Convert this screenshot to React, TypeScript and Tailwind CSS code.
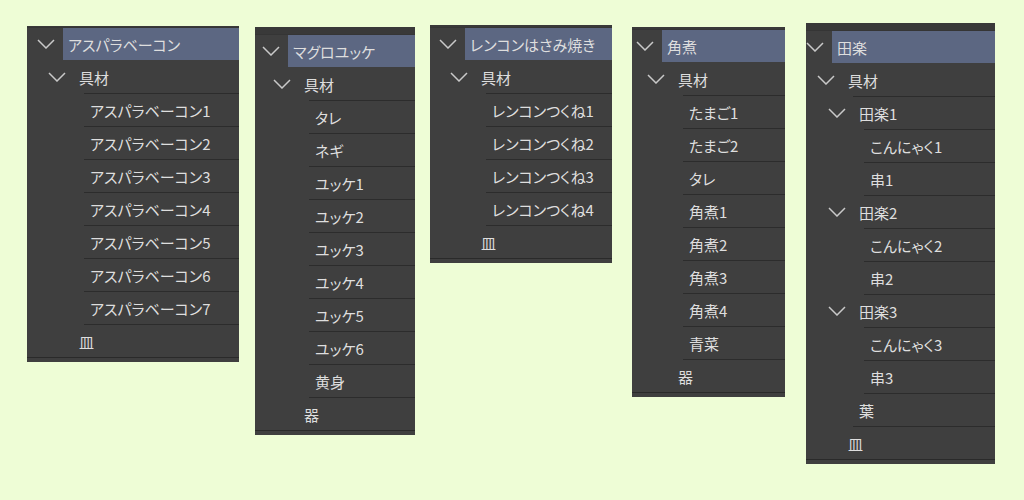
import React from "react";

type N = { t: string; c?: N[] };

const range = (p: string, n: number) => Array.from({ length: n }, (_, i) => ({ t: `${p}${i + 1}` }));

const Chevron = () => (
  <svg width="18" height="10" viewBox="0 0 18 10" className="shrink-0">
    <polyline points="1,1 9,9 17,1" fill="none" stroke="#c9c9c9" strokeWidth="1.5" />
  </svg>
);

function Node({ n, root, last }: { n: N; root?: boolean; last?: boolean }) {
  if (n.c) {
    const kids = n.c;
    return (
      <div>
        <div className={root ? "-ml-[25px] mb-[1px] flex h-[32px] items-center" : "-ml-[25px] flex h-[32px] items-center"}>
          <Chevron />
          <div
            className={
              root
                ? "ml-[8px] flex h-full flex-1 items-center bg-[#5c6782] pl-[5px] whitespace-nowrap"
                : "ml-[8px] flex h-full flex-1 items-center pl-[5px] whitespace-nowrap"
            }
          >
            {n.t}
          </div>
        </div>
        <div className={root ? "ml-[11px]" : "ml-[11px] border-t border-[#2c2c2c]"}>
          {kids.map((k, i) => (
            <Node key={i} n={k} last={last && i === kids.length - 1} />
          ))}
        </div>
      </div>
    );
  }
  return (
    <div
      className={
        last
          ? "flex h-[32px] items-center pl-[6px] whitespace-nowrap"
          : "flex h-[33px] items-center border-b border-[#2c2c2c] pl-[6px] whitespace-nowrap"
      }
    >
      {n.t}
    </div>
  );
}

type P = { tree: N; outer: string; strip: string; pad: string };

const panels: P[] = [
  {
    tree: { t: "アスパラベーコン", c: [{ t: "具材", c: range("アスパラベーコン", 7) }, { t: "皿" }] },
    outer: "mt-[26px] ml-[27px] w-[212px]",
    strip: "h-[2px]",
    pad: "pl-[35px]",
  },
  {
    tree: {
      t: "マグロユッケ",
      c: [{ t: "具材", c: [{ t: "タレ" }, { t: "ネギ" }, ...range("ユッケ", 6), { t: "黄身" }] }, { t: "器" }],
    },
    outer: "mt-[27px] ml-[16px] w-[160px]",
    strip: "h-[8px]",
    pad: "pl-[32px]",
  },
  {
    tree: { t: "レンコンはさみ焼き", c: [{ t: "具材", c: range("レンコンつくね", 4) }, { t: "皿" }] },
    outer: "mt-[25px] ml-[15px] w-[182px]",
    strip: "h-[3px]",
    pad: "pl-[34px]",
  },
  {
    tree: {
      t: "角煮",
      c: [
        { t: "具材", c: [{ t: "たまご1" }, { t: "たまご2" }, { t: "タレ" }, ...range("角煮", 4), { t: "青菜" }] },
        { t: "器" },
      ],
    },
    outer: "mt-[27px] ml-[20px] w-[153px]",
    strip: "h-[3px]",
    pad: "pl-[29px]",
  },
  {
    tree: {
      t: "田楽",
      c: [
        {
          t: "具材",
          c: [
            { t: "田楽1", c: [{ t: "こんにゃく1" }, { t: "串1" }] },
            { t: "田楽2", c: [{ t: "こんにゃく2" }, { t: "串2" }] },
            { t: "田楽3", c: [{ t: "こんにゃく3" }, { t: "串3" }] },
            { t: "葉" },
          ],
        },
        { t: "皿" },
      ],
    },
    outer: "mt-[23px] ml-[21px] w-[189px]",
    strip: "h-[8px]",
    pad: "pl-[25px]",
  },
];

export default function App() {
  return (
    <div className="flex h-[500px] w-full items-start bg-[#eefdd6] font-['Noto_Sans_CJK_JP',sans-serif] text-[15px] leading-none text-[#dedede] [font-feature-settings:'palt']">
      {panels.map((p, i) => (
        <div key={i} className={`${p.outer} shrink-0 overflow-hidden bg-[#3f3f3f]`}>
          <div className={`${p.strip} border-b border-[#353535] bg-[#393939]`} />
          <div className={p.pad}>
            <Node n={p.tree} root last />
          </div>
          <div className="h-[1px] bg-[#2a2a2a]" />
          <div className="h-[4px]" />
        </div>
      ))}
    </div>
  );
}
